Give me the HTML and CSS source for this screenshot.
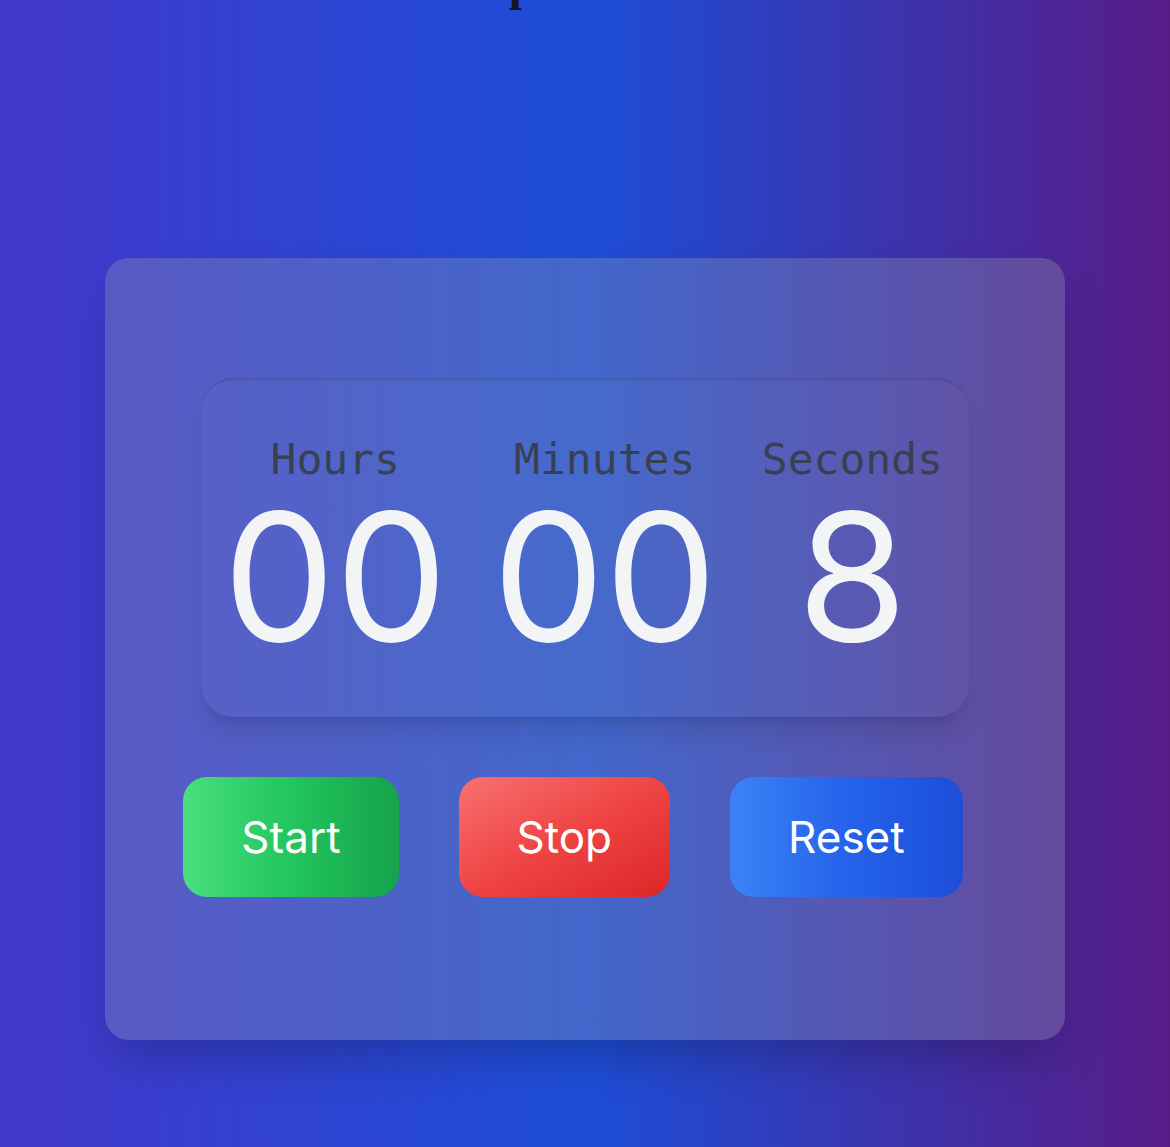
FILE: index.html
```html
<!DOCTYPE html>
<html lang="en">
<head>
<meta charset="utf-8">
<title>Stopwatch</title>
<link rel="stylesheet" href="styles.css">
</head>
<body>
<div class="page">
  <h1 class="title">Stopwatch</h1>
  <div class="card">
    <div class="display">
      <div class="unit">
        <span class="label">Hours</span>
        <span class="value">00</span>
      </div>
      <div class="unit">
        <span class="label">Minutes</span>
        <span class="value">00</span>
      </div>
      <div class="unit">
        <span class="label">Seconds</span>
        <span class="value">8</span>
      </div>
    </div>
    <div class="controls">
      <button class="btn btn-start">Start</button>
      <button class="btn btn-stop">Stop</button>
      <button class="btn btn-reset">Reset</button>
    </div>
  </div>
</div>
</body>
</html>
```

FILE: styles.css
```css
html, body {
  margin: 0;
  padding: 0;
}
body {
  min-height: 100vh;
  background: linear-gradient(to right, #4338ca, #1d4ed8, #581c87);
  font-family: "Liberation Serif", serif;
  overflow: hidden;
}
.page {
  display: flex;
  flex-direction: column;
  align-items: center;
}
.title {
  margin: -40px 0 250px;
  padding-right: 70px;
  font-size: 48px;
  line-height: 48px;
  font-weight: 700;
  color: #111827;
}
.card {
  width: 960px;
  box-sizing: border-box;
  padding: 120px 96px 143px;
  border-radius: 24px;
  background: rgba(156, 163, 175, 0.3);
  box-shadow: 0 25px 50px -12px rgba(0, 0, 0, 0.25);
}
.display {
  display: flex;
  justify-content: space-between;
  padding: 56px 26px 51px 22px;
  border-radius: 32px;
  background: rgba(255, 255, 255, 0.02);
  box-shadow: inset 0 3px 2px -1px rgba(0, 0, 0, 0.14),
              0 20px 25px -5px rgba(0, 0, 0, 0.1),
              0 8px 10px -6px rgba(0, 0, 0, 0.1);
}
.unit {
  display: flex;
  flex-direction: column;
  align-items: center;
  gap: 4px;
}
.label {
  font-family: "DejaVu Sans Mono", monospace;
  font-size: 43px;
  color: #374151;
}
.value {
  font-family: Inter, sans-serif;
  font-size: 178px;
  line-height: 1;
  color: #f3f4f6;
}
.controls {
  display: flex;
  justify-content: center;
  gap: 60px;
  margin-top: 60px;
  padding-right: 24px;
}
.btn {
  border: none;
  border-radius: 24px;
  padding: 30px 58px;
  font-family: Inter, sans-serif;
  font-size: 44px;
  line-height: 60px;
  color: #ffffff;
}
.btn-start {
  background: linear-gradient(to right, #4ade80, #22c55e, #16a34a);
}
.btn-stop {
  background: linear-gradient(to bottom right, #f87171, #ef4444, #dc2626);
}
.btn-reset {
  background: linear-gradient(to right, #3b82f6, #2563eb, #1d4ed8);
}
```
